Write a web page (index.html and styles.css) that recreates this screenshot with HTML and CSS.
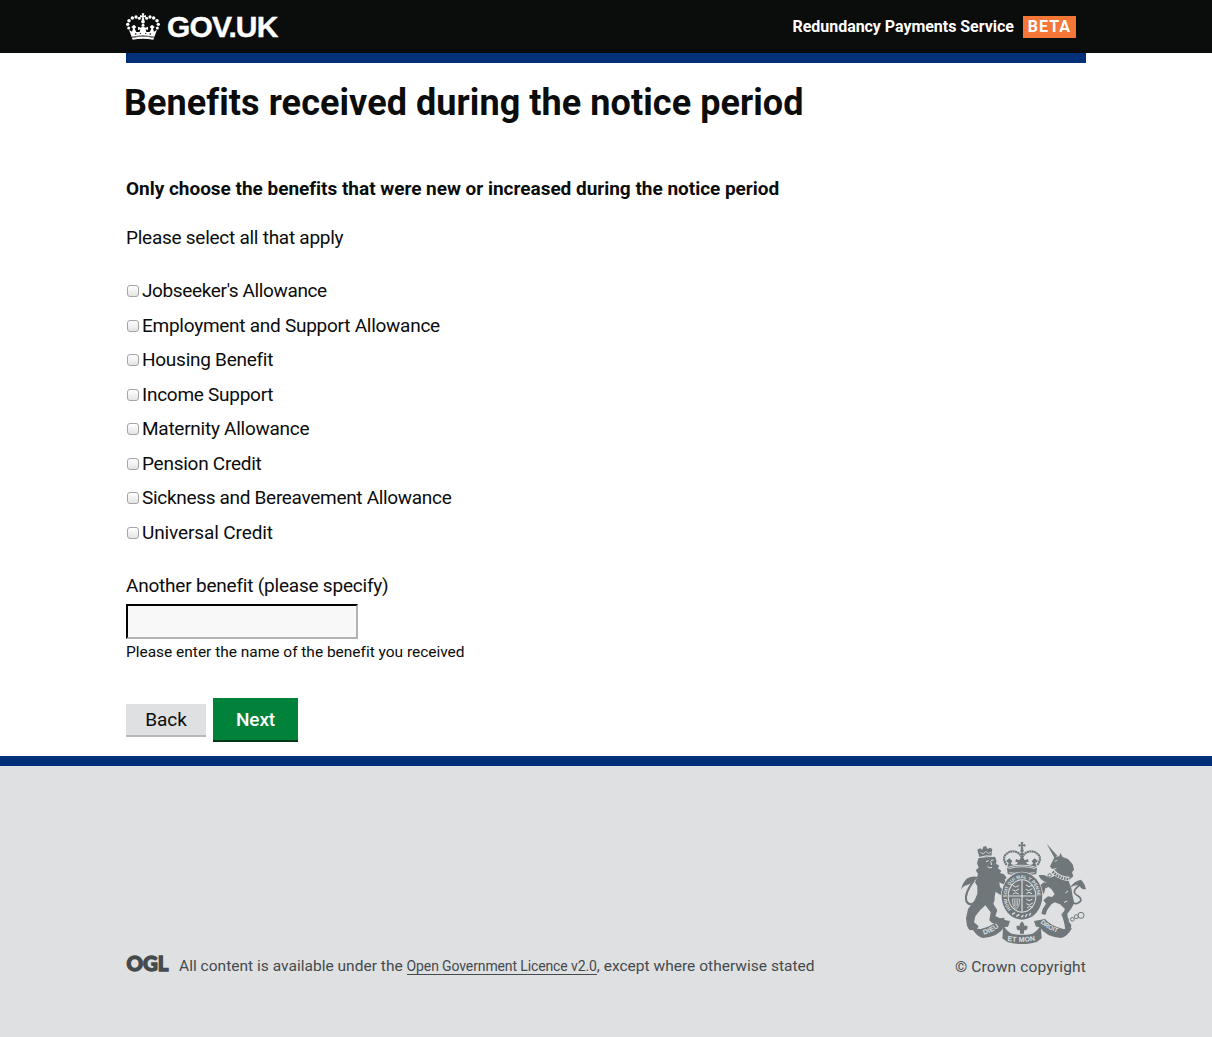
FILE: index.html
```html
<!DOCTYPE html>
<html lang="en">
<head>
<meta charset="utf-8">
<title>Benefits received during the notice period</title>
<link rel="stylesheet" href="styles.css">
</head>
<body>
<header class="header">
  <div class="wrap header-row">
    <a class="logo" href="#">
      <svg class="crown" viewBox="0 0 102 81" aria-hidden="true">
        <g fill="#fff">
          <path d="M47 1h8l-2 7 7-2v8l-7-2 2 9h-8l2-9-7 2V6l7 2z"/>
          <circle cx="51" cy="26" r="5.5"/><circle cx="51" cy="37" r="4.5"/>
          <circle cx="40" cy="16" r="4.5"/><circle cx="30" cy="12" r="5"/><circle cx="19" cy="15" r="5.2"/><circle cx="9" cy="23" r="5.2"/><circle cx="5" cy="34" r="5"/><circle cx="8" cy="45" r="4.5"/>
          <circle cx="62" cy="16" r="4.5"/><circle cx="72" cy="12" r="5"/><circle cx="83" cy="15" r="5.2"/><circle cx="93" cy="23" r="5.2"/><circle cx="97" cy="34" r="5"/><circle cx="94" cy="45" r="4.5"/>
          <path d="M9 50l9 6 3-9-5-5 8-7 7 7-5 5 5 10 10 0 2-8-7 2v-10l8 3 4-3h6l4 3 8-3v10l-7-2 2 8 10 0 5-10-5-5 7-7 8 7-5 5 3 9 9-6-9 24q-33-7-66 0z"/>
          <path d="M18 75q33-7 66 0l-2 5q-31-6-62 0z"/>
        </g>
        <path d="M17 72q34-8 68 0" fill="none" stroke="#0b0c0c" stroke-width="2"/>
        <g fill="#0b0c0c"><circle cx="29" cy="63" r="2.5"/><circle cx="73" cy="63" r="2.5"/><circle cx="43" cy="61" r="2"/><circle cx="59" cy="61" r="2"/></g>
      </svg>
      <span class="logo-text">GOV.UK</span>
    </a>
    <div class="service"><span class="service-name">Redundancy Payments Service</span><span class="beta">BETA</span></div>
  </div>
</header>
<main class="wrap main">
  <h1>Benefits received during the notice period</h1>
  <p class="lead">Only choose the benefits that were new or increased during the notice period</p>
  <form>
    <p class="hint">Please select all that apply</p>
    <div class="options">
      <label><input type="checkbox"><span class="tight">Jobseeker's Allowance</span></label>
      <label><input type="checkbox"><span>Employment and Support Allowance</span></label>
      <label><input type="checkbox"><span>Housing Benefit</span></label>
      <label><input type="checkbox"><span>Income Support</span></label>
      <label><input type="checkbox"><span>Maternity Allowance</span></label>
      <label><input type="checkbox"><span>Pension Credit</span></label>
      <label><input type="checkbox"><span class="snug">Sickness and Bereavement Allowance</span></label>
      <label><input type="checkbox"><span class="loose">Universal Credit</span></label>
    </div>
    <label class="field-label" for="other">Another benefit (please specify)</label>
    <input class="field" id="other" type="text">
    <p class="note">Please enter the name of the benefit you received</p>
    <div class="buttons">
      <button class="back" type="button">Back</button>
      <button class="next" type="button">Next</button>
    </div>
  </form>
</main>
<footer class="footer">
  <div class="wrap footer-row">
    <div class="licence">
      <svg class="ogl" viewBox="0 0 43 18" role="img" aria-label="OGL"><text x="0.5" y="16.8" textLength="42" lengthAdjust="spacingAndGlyphs">OGL</text></svg>
      <p>All content is available under the <a href="#">Open Government Licence v2.0</a>, except where otherwise stated</p>
    </div>
    <div class="crown-copy">
      <svg class="crest" viewBox="33 21 375 306" aria-hidden="true">
        <defs>
          <path id="garter" d="M184 223A46 54 0 1 1 248 223"/>
          <path id="dieu" d="M101 299Q132 292 158 266"/>
          <path id="mon" d="M172 317Q216 325 264 315"/>
          <path id="droit" d="M271 263Q297 289 342 298"/>
        </defs>
        <g fill="#6f777b">
          <!-- lion -->
          <path d="M88 66l-6-22 8-4 7 4 3-9 8-2 4 9 8-4 7 4-3 22z"/>
          <path d="M86 68L134 65Q142 75 138 86L148 92 144 100 154 108 150 114 162 118 170 128 164 134 170 144 160 148 148 142 150 156 162 168 158 182 148 178 137 170 134 184Q136 196 130 206L142 226 136 243 150 250 164 248 160 264 126 264 118 256 122 232 106 211 90 226 76 244 72 262 86 274 78 286 58 285 51 273 48 250 54 222 74 196 82 176 82 154 75 142 81 128 84 116 77 106 86 98 81 84Z"/>
          <path d="M33 164Q38 142 52 130 66 122 84 126 70 144 52 150 40 152 33 164Z"/>
          <!-- unicorn -->
          <path d="M290 26L322 62 313 68Z"/>
          <path d="M300 94L314 66 328 64 331 54 338 66 354 72 368 88 372 104 366 112 370 124 358 134 357 142 364 160 368 184 373 204 363 222 352 236 354 256 364 270 362 284 346 282 342 262 336 240 345 222 330 208 314 202 304 208 292 224 286 240 274 236 278 222 288 206 280 196 294 184 306 186 314 178 306 164 296 156 286 160 282 176 274 172 268 152 282 142 292 144 280 138 270 130 266 120 282 120 300 128 312 124 310 106 322 98 306 102Z"/>
          <path d="M360 158Q370 140 392 134 404 144 408 163 394 164 388 152 376 148 360 158Z"/>
          <!-- scrolls -->
          <path d="M66 280L92 282Q127 275 147 252L180 258 174 275 163 276Q146 305 99 309 81 307 66 280Z"/>
          <path d="M366 280L340 282Q305 275 285 252L252 258 258 275 269 276Q286 305 333 309 351 307 366 280Z"/>
          <path d="M160 270Q170 290 185 296 216 303 247 296 262 290 272 270L275 310 260 321Q216 334 172 321L157 310Z"/>
          <!-- royal crown -->
          <path d="M212 21h8l-2 8 8-2v8l-8-2 2 10h-8l2-10-8 2v-8l8 2z"/>
          <circle cx="216" cy="47" r="5"/><circle cx="216" cy="57" r="5"/>
          <path d="M171 99Q216 84 261 99L259 117Q216 128 173 117Z"/>
          <path d="M172 96L176 84 168 78 178 70 187 78 182 86 190 90 200 88 204 82 196 80 198 72 208 76 213 66 219 66 224 76 234 72 236 80 228 82 232 88 242 90 250 86 245 78 254 70 264 78 256 84 260 96Q216 82 172 96Z"/>
        </g>
        <g fill="none" stroke="#6f777b">
          <path d="M72 136Q42 176 49 198 57 216 82 200" stroke-width="6"/>
          <path d="M390 150Q360 170 383 182 403 196 382 205 372 208 366 200" stroke-width="5"/>
          <path d="M170 90Q156 72 167 59 179 46 196 50 210 54 214 66" stroke-width="6.5" stroke-dasharray="6 1.2"/>
          <path d="M262 90Q276 72 265 59 253 46 236 50 222 54 218 66" stroke-width="6.5" stroke-dasharray="6 1.2"/>
          <g stroke-width="3"><circle cx="341" cy="239" r="5.5"/><circle cx="350" cy="254" r="5.5"/><circle cx="367" cy="253" r="5.5"/><circle cx="379" cy="245" r="6"/><circle cx="393" cy="241" r="9"/><circle cx="299" cy="121" r="5"/><circle cx="289" cy="134" r="5"/></g>
        </g>
        <g fill="none" stroke="#dee0e2">
          <path d="M86 68Q108 59 132 64" stroke-width="3"/>
          <path d="M91 52l9 5 8-8 7 7 9-5" stroke-width="2.5"/>
          <path d="M108 80l8-3m7-1l8-1m-9 4l3 11m-13 5q7 6 14 2" stroke-width="3"/>
          <path d="M308 108Q326 130 358 132" stroke-width="13"/>
          <path d="M314 79l8-3" stroke-width="2.5"/>
          <path d="M346 174l8-6m-2 30l-10 4" stroke-width="3"/>
          <path d="M176 101Q216 89 256 101M178 113Q216 122 254 113" stroke-width="2.5"/>
        </g>
        <path d="M308 110Q326 130 356 132" fill="none" stroke="#6f777b" stroke-width="8" stroke-dasharray="5 3"/>
        <ellipse cx="216" cy="183" rx="63" ry="73" fill="#dee0e2"/>
        <ellipse cx="216" cy="183" rx="61" ry="71" fill="#6f777b"/>
        <ellipse cx="216" cy="183" rx="43" ry="50" fill="#dee0e2"/>
        <ellipse cx="216" cy="183" rx="40" ry="47" fill="#6f777b"/>
        <g fill="none" stroke="#dee0e2">
          <path d="M216 136v94M176 183h80" stroke-width="3.5"/>
          <path d="M188 151l9 5 10-4m-20 12l9 4 11-6m-18 15l8-4 9 4m22-27l9 5 10-4m-20 12l9 4 11-6m-18 15l8-4 9 4m-17 16l8 5 10-4m-18 13l9 4 10-6m-17 15l8-5 9 3" stroke-width="3"/>
          <path d="M187 192h22q0 25-11 31-11-8-11-31m6 3v18m5-18v23m5-23v18" stroke-width="2.2"/>
          <path d="M186 238l9-5m4 11l9-6m6 9l6-7m6 6l5-9m7 5l4-8" stroke-width="4"/>
        </g>
        <g class="motto">
          <text class="garter-text"><textPath href="#garter">HONI SOIT QUI MAL Y PENSE</textPath></text>
          <text><textPath href="#dieu">DIEU</textPath></text>
          <text><textPath href="#mon">ET MON</textPath></text>
          <text class="droit-text"><textPath href="#droit">DROIT</textPath></text>
        </g>
        <path d="M182 263Q216 257 250 263L245 288Q216 296 187 288Z" fill="#dee0e2"/>
        <path d="M216 259q13 13 3 24 4-15 13-10 3 13-10 13v10h-12v-10q-13 0-10-13 9-5 13 10-10-11 3-24z" fill="#6f777b"/>
      </svg>
      <a href="#">© Crown copyright</a>
    </div>
  </div>
</footer>
</body>
</html>
```
FILE: styles.css
```css
* { box-sizing: border-box; }
body { margin: 0; background: #fff; color: #0b0c0c; font-family: Roboto, "Liberation Sans", sans-serif; font-size: 19px; line-height: 25px; letter-spacing: -0.26px; }
.wrap { width: 960px; margin: 0 auto; }
h1, p { margin: 0; }
.header { height: 53px; background: #0b0c0c; color: #fff; }
.header-row { display: flex; justify-content: space-between; align-items: center; height: 53px; padding-right: 10px; }
.logo { display: flex; align-items: center; gap: 7px; color: #fff; text-decoration: none; }
.crown { width: 34px; height: 27px; }
.logo-text { font: bold 30px/34px "Liberation Sans", sans-serif; letter-spacing: -0.85px; -webkit-text-stroke: 0.4px #fff; }
.service { display: flex; align-items: center; gap: 9px; font-weight: 700; font-size: 16px; letter-spacing: -0.04px; }
.beta { height: 22px; padding: 0 5px; background: #f47738; line-height: 22px; letter-spacing: 1px; }
.main { height: 703px; border-top: 10px solid #003078; white-space: nowrap; }
h1 { margin: 15px 0 0 -2px; font-size: 36px; line-height: 50px; font-weight: 700; letter-spacing: 0.07px; }
.lead { margin-top: 48px; font-weight: 700; letter-spacing: -0.02px; }
.hint { margin-top: 24px; }
.options { display: grid; grid-auto-rows: 34.5px; margin-top: 23.4px; }
.options label { display: flex; align-items: center; gap: 3px; }
.options .tight { letter-spacing: -0.38px; }
.options .snug { letter-spacing: -0.31px; }
.options .loose { letter-spacing: -0.12px; }
.options input { appearance: none; width: 12px; height: 12px; margin: 1px 0 0 1px; border: 1px solid #a4a4a4; border-radius: 3px; background: linear-gradient(#fff, #e4e4e4); }
.field-label { display: block; margin-top: 23.6px; letter-spacing: -0.21px; }
.field { display: block; width: 232px; height: 35px; margin-top: 6px; border: 2px solid; border-color: #000 #b1b4b6 #b1b4b6 #000; background: #f8f8f8; }
.note { margin-top: 3px; font-size: 15.5px; line-height: 20px; letter-spacing: -0.02px; }
.buttons { display: flex; align-items: flex-start; gap: 7px; margin-top: 36px; }
.buttons button { border: 0; font: 19px/30px Roboto, sans-serif; padding: 2px 0 0; letter-spacing: -0.1px; }
.buttons .back { width: 80px; height: 33px; margin-top: 6px; padding-top: 1px; background: #dee0e2; border-bottom: 2px solid #b5b7b8; color: #0b0c0c; }
.buttons .next { width: 85px; height: 44px; background: #00823b; border-bottom: 2px solid #003618; color: #fff; font-weight: 500; }
.footer { height: 281px; border-top: 10px solid #003078; background: #dee0e2; color: #454a4d; font-size: 15.5px; line-height: 20px; letter-spacing: 0; white-space: nowrap; }
.footer-row { display: flex; justify-content: space-between; align-items: flex-end; height: 211px; }
.licence { display: flex; align-items: center; gap: 10px; }
.licence p { letter-spacing: 0.02px; }
.ogl { width: 43px; height: 18px; margin-bottom: 5px; overflow: visible; }
.ogl text { font: 900 21px Lato, sans-serif; letter-spacing: 0; fill: #454a4d; stroke: #454a4d; stroke-width: 1.3px; }
.footer a { color: #454a4d; text-decoration: none; }
.licence a { display: inline-block; font-size: 14px; line-height: 15px; letter-spacing: -0.12px; border-bottom: 1px solid #454a4d; }
.crown-copy { display: flex; flex-direction: column; align-items: flex-end; gap: 13px; letter-spacing: 0.16px; }
.crest { width: 125px; height: 102px; }
.motto { font: bold 21px "Liberation Sans", sans-serif; letter-spacing: 0.5px; fill: #dee0e2; }
.garter-text { font-size: 14px; letter-spacing: 0; }
.droit-text { font-size: 19px; letter-spacing: 0; }
```
